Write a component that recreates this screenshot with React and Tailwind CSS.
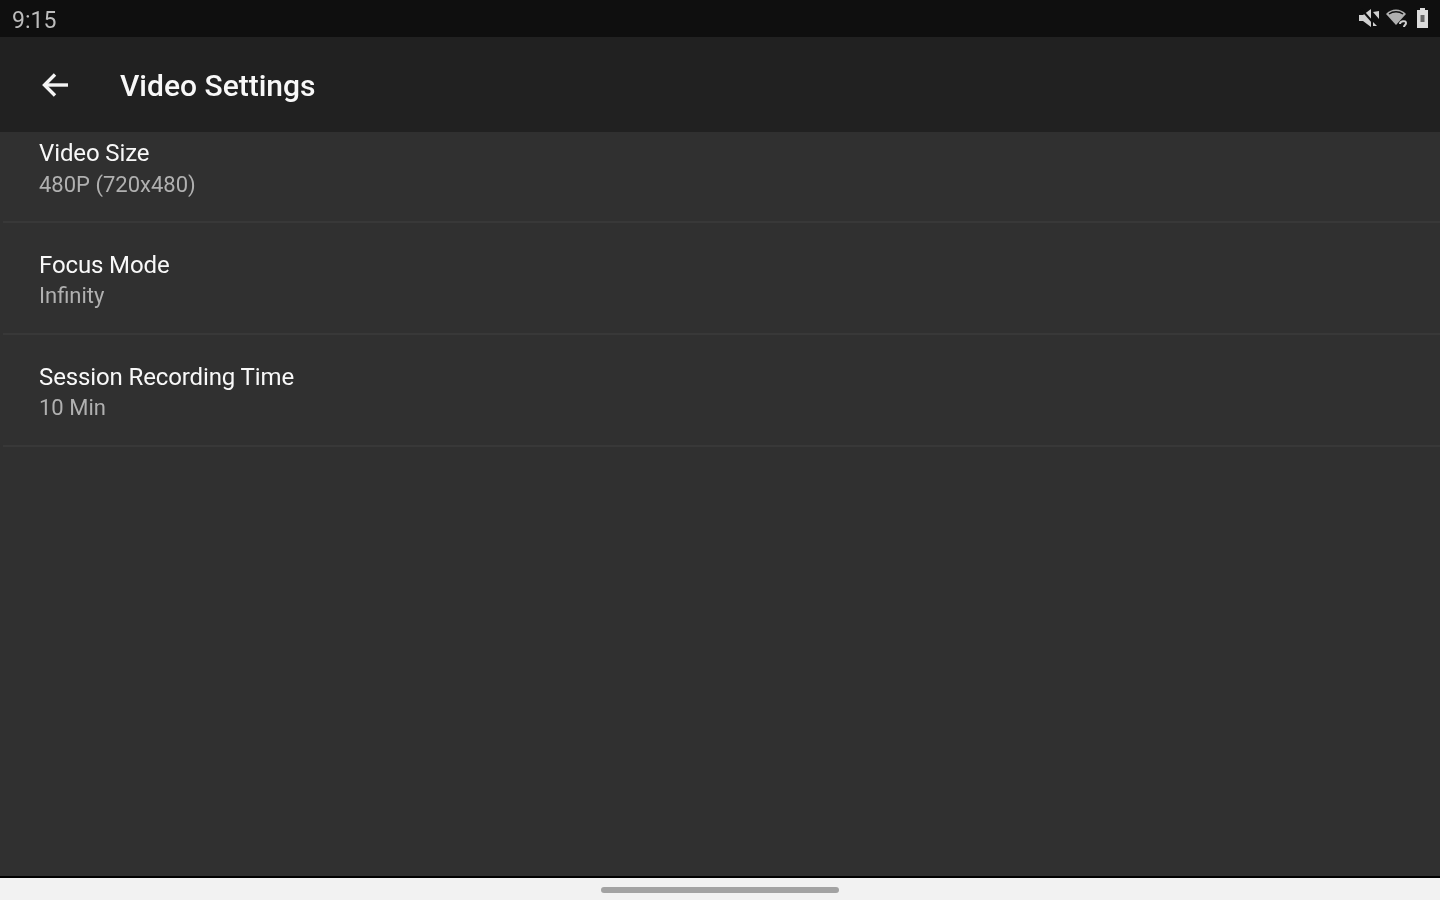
import React from "react";

function Row({ title, value, first }) {
  return (
    <div className={first ? "h-[91px] ml-[3px] border-b-2 border-[#383838] pl-[36px] pt-[6px]" : "h-[112px] ml-[3px] border-b-2 border-[#383838] pl-[36px] pt-[27px]"}>
      <div className="text-[24px] leading-[31px] text-[#f8f8f8] font-['Roboto',sans-serif] tracking-[-0.12px] whitespace-nowrap">{title}</div>
      <div className={first ? "text-[22px] leading-[31px] text-[#b0b0b0] font-['Roboto',sans-serif] whitespace-nowrap" : "-mt-[1px] text-[22px] leading-[31px] text-[#b0b0b0] font-['Roboto',sans-serif] whitespace-nowrap"}>{value}</div>
    </div>
  );
}

export default function App() {
  return (
    <div className="w-[1440px] h-[900px] flex flex-col overflow-hidden bg-[#303030] font-['Roboto',sans-serif] blur-[0.5px]">
      <div className="h-[37px] shrink-0 bg-[#0f0f0f] flex items-center justify-between pl-[12px] pr-[11px]">
        <span className="text-[23px] leading-none text-[#bcbcbc] mt-[4px]">9:15</span>
        <div className="flex items-center gap-[5px] mb-[2px]">
          <svg width="22" height="22" viewBox="0 0 22 22" fill="#d0d0d0">
            <path d="M1 8h4l8-6v18l-8-6H1z" />
            <path d="M3 2l16 18" stroke="#0f0f0f" strokeWidth="2" />
            <path d="M15 5l6 7V4zM15 15l4 4h-4z" />
          </svg>
          <svg width="24" height="20" viewBox="0 0 24 20" fill="none">
            <path d="M1 6C6 0 16 0 21 6l-10 11z" fill="#b0b0b0" />
            <path d="M4 6c4-3 10-3 14 0" stroke="#0f0f0f" strokeWidth="1.5" />
            <path d="M15 16c0-3 6-4 6-1 0 2-2 2-2 4" stroke="#d0d0d0" strokeWidth="2" />
          </svg>
          <svg width="13" height="20" viewBox="0 0 13 20" className="ml-[2px]">
            <path d="M4 0h5v2h3v18H1V2h3z" fill="#dcdcdc" />
            <rect x="4.5" y="7" width="4" height="7" fill="#666" />
          </svg>
        </div>
      </div>
      <div className="h-[95px] shrink-0 bg-[#212121] flex items-center pl-[41px]">
        <svg width="28" height="28" viewBox="0 0 28 28" fill="none" stroke="#f4f4f4" strokeWidth="3.4" className="mt-[1px]">
          <path d="M27 14H4" />
          <path d="M14 3.5L3.5 14 14 24.5" />
        </svg>
        <span className="ml-[51px] text-[30px] font-medium leading-none text-[#f8f8f8] mt-[2px]">Video Settings</span>
      </div>
      <div className="flex-1">
        <Row first title="Video Size" value="480P (720x480)" />
        <Row title="Focus Mode" value="Infinity" />
        <Row title="Session Recording Time" value="10 Min" />
      </div>
      <div className="h-[2px] shrink-0 bg-black" />
      <div className="h-[22px] shrink-0 bg-[#f2f2f2] flex justify-center pt-[9px]">
        <div className="w-[238px] h-[6px] rounded-full bg-[#a3a3a3]" />
      </div>
    </div>
  );
}
